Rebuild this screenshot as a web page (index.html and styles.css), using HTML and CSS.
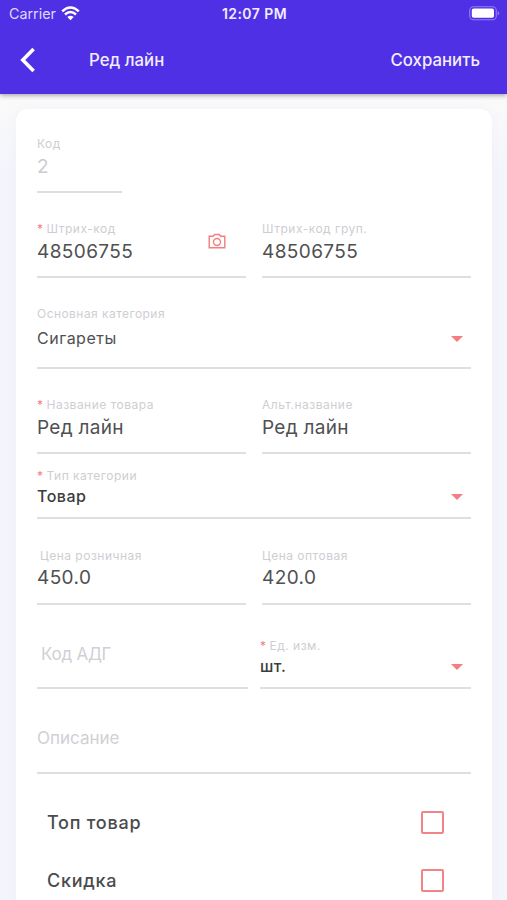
FILE: index.html
```html
<!DOCTYPE html>
<html lang="ru">
<head>
<meta charset="utf-8">
<title>Ред лайн</title>
<link rel="stylesheet" href="styles.css">
</head>
<body>
<header class="header">
  <div class="status">
    <div class="carrier"><span>Carrier</span>
      <svg width="19" height="15" viewBox="0 0 19 15" fill="none" stroke="#fff" stroke-width="2.5"><path d="M1.2 5.3Q9.5-2.4 17.8 5.3M4 8.5Q9.5 3.6 15 8.5"/><path d="M6.3 11.1Q9.5 8.4 12.7 11.1L9.5 14.2Z" fill="#fff" stroke="none"/></svg>
    </div>
    <time class="clock">12:07 PM</time>
    <svg class="battery" width="31" height="15" viewBox="0 0 31 15"><rect x=".7" y=".7" width="26.6" height="13" rx="3.8" fill="none" stroke="#9280f0" stroke-width="1.1"/><rect x="2.8" y="2.6" width="22.2" height="9.2" rx="1.8" fill="#fff"/><path d="M28.7 5v4.6q1.6-.7 1.6-2.3T28.7 5Z" fill="#9280f0"/></svg>
  </div>
  <nav class="nav">
    <svg class="back" width="16" height="26" viewBox="0 0 16 26" fill="none" stroke="#fff" stroke-width="3.6"><path d="M13.6 2 2.8 13l10.8 11"/></svg>
    <h1 class="title">Ред лайн</h1>
    <span class="save">Сохранить</span>
  </nav>
</header>
<main class="card">
  <div class="row first">
    <div class="field short disabled"><span class="label code">Код</span><span class="value">2</span></div>
  </div>
  <div class="row">
    <div class="field"><span class="label"><i>*</i>Штрих-код</span><span class="value">48506755</span>
      <svg class="camera" width="18" height="17" viewBox="0 0 18 17" fill="none" stroke="#f57c7f" stroke-width="1.4"><path d="M1.2 3.2h4.1L6.6 1.5h4.8l1.3 1.7h4.1v11.6H1.2z"/><circle cx="9" cy="9" r="3.5"/></svg>
    </div>
    <div class="field"><span class="label group">Штрих-код груп.</span><span class="value">48506755</span></div>
  </div>
  <div class="row category">
    <div class="field roomy"><span class="label main">Основная категория</span><span class="value select">Сигареты</span><b class="arrow"></b></div>
  </div>
  <div class="row">
    <div class="field"><span class="label"><i>*</i>Название товара</span><span class="value name">Ред лайн</span></div>
    <div class="field"><span class="label">Альт.название</span><span class="value name">Ред лайн</span></div>
  </div>
  <div class="row type">
    <div class="field compact"><span class="label"><i>*</i>Тип категории</span><span class="value select strong">Товар</span><b class="arrow"></b></div>
  </div>
  <div class="row price">
    <div class="field"><span class="label inset">Цена розничная</span><span class="value">450.0</span></div>
    <div class="field"><span class="label">Цена оптовая</span><span class="value">420.0</span></div>
  </div>
  <div class="row unit">
    <div class="field empty adg"><span class="placeholder">Код АДГ</span></div>
    <div class="field compact"><span class="label"><i>*</i>Ед. изм.</span><span class="value select strong">шт.</span><b class="arrow"></b></div>
  </div>
  <div class="row">
    <div class="field empty"><span class="placeholder">Описание</span></div>
  </div>
  <div class="check"><span class="top">Топ товар</span><span class="box"></span></div>
  <div class="check"><span>Скидка</span><span class="box"></span></div>
</main>
</body>
</html>
```
FILE: styles.css
```css
* { box-sizing: border-box; }
body {
  margin: 0;
  height: 900px;
  overflow: hidden;
  font-family: Inter, "Liberation Sans", sans-serif;
  background: linear-gradient(#fafafa 94px, #f4f5fb 170px);
}
.header {
  position: relative;
  height: 94px;
  color: #f0edff;
  background: #5030e5;
  box-shadow: 0 1px 5px rgba(0, 0, 0, .4);
}
.status {
  display: grid;
  grid-template-columns: 1fr auto 1fr;
  align-items: center;
  height: 27px;
  padding: 0 7px 0 9px;
}
.carrier { display: flex; align-items: center; gap: 5px; font-size: 14.3px; color: #ded9fc; }
.clock { font-size: 14px; font-weight: 600; letter-spacing: .45px; }
.battery { justify-self: end; }
.nav { display: flex; align-items: center; height: 65px; padding: 0 27px 0 20px; font-size: 17px; }
.title { margin: 0 auto 0 53px; font-size: 16.8px; font-weight: 500; }
.save { font-size: 16.8px; font-weight: 500; }
.card {
  height: 810px;
  margin: 15px 15px 0 16px;
  padding: 0 21px 0 21px;
  border-radius: 12px;
  background: #fff;
  box-shadow: 0 0 12px rgba(80, 90, 200, .04);
}
.row { display: grid; grid-auto-flow: column; grid-auto-columns: minmax(0, 1fr); gap: 16px; height: 85px; }
.first { height: 84px; }
.category { height: 91px; }
.type { height: 65px; }
.price { height: 86px; }
.unit { grid-template-columns: 211px 1fr; gap: 12px; height: 84px; }
.field {
  position: relative;
  display: flex;
  flex-direction: column;
  justify-content: flex-end;
  padding-bottom: 12px;
  border-bottom: 2px solid #dfdfdf;
  white-space: nowrap;
}
.short { width: 85px; }
.label { height: 16px; margin-bottom: 3px; font-size: 12px; line-height: 16px; letter-spacing: .5px; color: #ceced2; }
.label i { margin-right: 3px; font-style: normal; color: #f7777b; }
.inset { padding-left: 3px; }
.value { height: 24px; font-size: 19px; line-height: 24px; letter-spacing: .4px; color: #505052; }
.disabled .value { color: #cbcbcb; }
.name { letter-spacing: .3px; }
.price .field { padding-bottom: 13px; }
.price .label { margin-bottom: 2px; }
.select { font-size: 16px; letter-spacing: .5px; }
.strong { font-weight: 500; color: #3c3c3e; }
.roomy { padding-bottom: 17px; }
.roomy .label { margin-bottom: 4px; letter-spacing: .45px; }
.compact { padding-bottom: 9px; }
.compact .label { margin-bottom: 0; }
.empty { padding-bottom: 22px; }
.placeholder { height: 24px; font-size: 17px; line-height: 24px; color: #d0d0d5; }
.adg .placeholder { padding-left: 4px; letter-spacing: -.25px; }
.adg { padding-bottom: 21px; }
.camera { position: absolute; right: 20px; bottom: 26px; }
.arrow {
  position: absolute;
  right: 8px;
  bottom: 25px;
  border: solid transparent;
  border-width: 6px 6px 0;
  border-top-color: #f57c80;
}
.compact .arrow { bottom: 17px; }
.check {
  display: flex;
  align-items: center;
  justify-content: space-between;
  height: 58px;
  padding: 0 27px 0 10px;
  font-size: 18px;
  font-weight: 500;
  letter-spacing: .75px;
  color: #4b4b4d;
}
.row + .check { margin-top: 19px; }
.box { width: 23px; height: 23px; border: 2px solid #f08587; border-radius: 2px; }
```
